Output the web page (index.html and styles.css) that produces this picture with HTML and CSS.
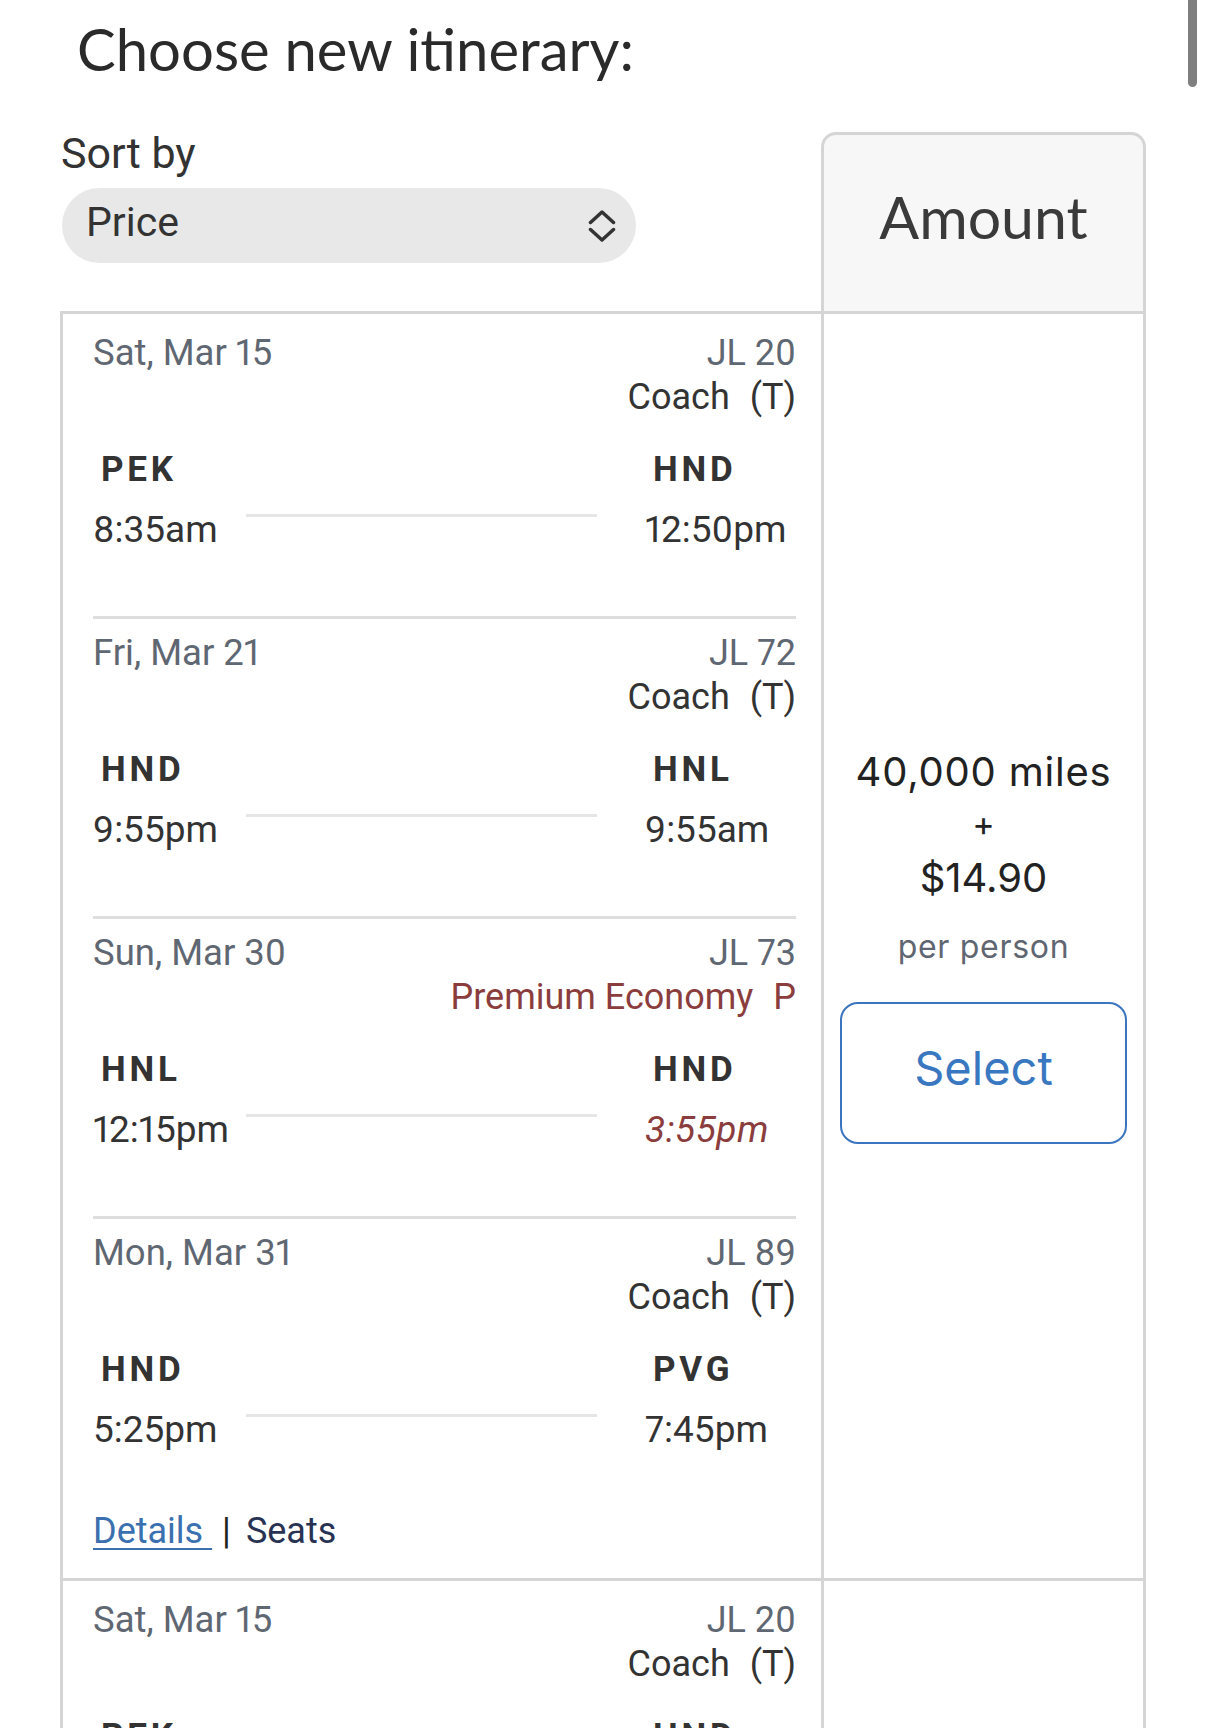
FILE: index.html
```html
<!DOCTYPE html>
<html lang="en">
<head>
<meta charset="utf-8">
<title>Choose new itinerary</title>
<link rel="stylesheet" href="styles.css">
</head>
<body>
<div class="scrollbar"></div>
<main class="page">
  <h1 class="title">Choose new itinerary:</h1>
  <div class="grid">
    <div class="sort">
      <label class="sort-label">Sort by</label>
      <div class="select">
        <span class="select-value">Price</span>
        <svg class="chev" viewBox="0 0 28 32" aria-hidden="true">
          <path d="M2.5 12.5 L14 2 L25.5 12.5" />
          <path d="M2.5 19.5 L14 30 L25.5 19.5" />
        </svg>
      </div>
    </div>
    <div class="amount-head">Amount</div>

    <div class="flights">
      <div class="seg first">
        <div class="seg-top">
          <span class="date">Sat, Mar 15</span>
          <div class="flt"><div class="fno">JL 20</div><div class="cabin">Coach <span class="cls">(T)</span></div></div>
        </div>
        <div class="route">
          <div class="code">PEK</div><div></div><div class="code code-arr">HND</div>
          <div class="time">8:35am</div><div class="line"></div><div class="time time-arr">12:50pm</div>
        </div>
      </div>
      <div class="seg">
        <div class="seg-top">
          <span class="date">Fri, Mar 21</span>
          <div class="flt"><div class="fno">JL 72</div><div class="cabin">Coach <span class="cls">(T)</span></div></div>
        </div>
        <div class="route">
          <div class="code">HND</div><div></div><div class="code code-arr">HNL</div>
          <div class="time">9:55pm</div><div class="line"></div><div class="time time-arr">9:55am</div>
        </div>
      </div>
      <div class="seg">
        <div class="seg-top">
          <span class="date">Sun, Mar 30</span>
          <div class="flt"><div class="fno">JL 73</div><div class="cabin prem">Premium Economy <span class="cls">P</span></div></div>
        </div>
        <div class="route">
          <div class="code">HNL</div><div></div><div class="code code-arr">HND</div>
          <div class="time">12:15pm</div><div class="line"></div><div class="time time-arr changed">3:55pm</div>
        </div>
      </div>
      <div class="seg last">
        <div class="seg-top">
          <span class="date">Mon, Mar 31</span>
          <div class="flt"><div class="fno">JL 89</div><div class="cabin">Coach <span class="cls">(T)</span></div></div>
        </div>
        <div class="route">
          <div class="code">HND</div><div></div><div class="code code-arr">PVG</div>
          <div class="time">5:25pm</div><div class="line"></div><div class="time time-arr">7:45pm</div>
        </div>
      </div>
      <div class="links"><a class="details" href="#">Details </a><span class="bar">|</span><a class="seats" href="#">Seats</a></div>
    </div>
    <div class="price">
      <div class="miles">40,000 miles</div>
      <div class="plus">+</div>
      <div class="usd">$14.90</div>
      <div class="pp">per person</div>
      <button class="select-btn" type="button">Select</button>
    </div>

    <div class="flights">
      <div class="seg first">
        <div class="seg-top">
          <span class="date">Sat, Mar 15</span>
          <div class="flt"><div class="fno">JL 20</div><div class="cabin">Coach <span class="cls">(T)</span></div></div>
        </div>
        <div class="route">
          <div class="code">PEK</div><div></div><div class="code code-arr">HND</div>
          <div class="time">8:35am</div><div class="line"></div><div class="time time-arr">12:50pm</div>
        </div>
      </div>
      <div class="seg">
        <div class="seg-top">
          <span class="date">Fri, Mar 21</span>
          <div class="flt"><div class="fno">JL 72</div><div class="cabin">Coach <span class="cls">(T)</span></div></div>
        </div>
        <div class="route">
          <div class="code">HND</div><div></div><div class="code code-arr">HNL</div>
          <div class="time">9:55pm</div><div class="line"></div><div class="time time-arr">9:55am</div>
        </div>
      </div>
      <div class="seg">
        <div class="seg-top">
          <span class="date">Sun, Mar 30</span>
          <div class="flt"><div class="fno">JL 73</div><div class="cabin">Coach <span class="cls">(T)</span></div></div>
        </div>
        <div class="route">
          <div class="code">HNL</div><div></div><div class="code code-arr">HND</div>
          <div class="time">12:15pm</div><div class="line"></div><div class="time time-arr">3:55pm</div>
        </div>
      </div>
      <div class="seg last">
        <div class="seg-top">
          <span class="date">Mon, Mar 31</span>
          <div class="flt"><div class="fno">JL 89</div><div class="cabin">Coach <span class="cls">(T)</span></div></div>
        </div>
        <div class="route">
          <div class="code">HND</div><div></div><div class="code code-arr">PVG</div>
          <div class="time">5:25pm</div><div class="line"></div><div class="time time-arr">7:45pm</div>
        </div>
      </div>
      <div class="links"><a class="details" href="#">Details </a><span class="bar">|</span><a class="seats" href="#">Seats</a></div>
    </div>
    <div class="price">
      <div class="miles">45,000 miles</div>
      <div class="plus">+</div>
      <div class="usd">$14.90</div>
      <div class="pp">per person</div>
      <button class="select-btn" type="button">Select</button>
    </div>
  </div>
</main>
</body>
</html>
```

FILE: styles.css
```css
* { box-sizing: border-box; }

html, body {
  margin: 0;
  padding: 0;
  background: #ffffff;
}

body {
  font-family: Roboto, "Liberation Sans", sans-serif;
  font-variant-numeric: proportional-nums;
  color: #333333;
}

.scrollbar {
  position: fixed;
  top: 0;
  left: 1188px;
  width: 9px;
  height: 87px;
  background: #7f7f7f;
  border-radius: 0 0 5px 5px;
}

.page {
  padding: 14px 0 0 60px;
}

.title {
  margin: 0 0 48px 17px;
  font-family: Lato, "Open Sans", sans-serif;
  font-weight: 400;
  font-size: 58px;
  line-height: 70px;
  color: #2a2a2a;
}

.grid {
  display: grid;
  grid-template-columns: 761px 325px;
}

.sort-label {
  display: block;
  font-size: 43px;
  line-height: 42px;
  color: #333333;
  margin-left: 1px;
}

.select {
  margin: 14px 0 0 2px;
  width: 574px;
  height: 75px;
  border-radius: 38px;
  background: #e8e8e8;
  display: flex;
  align-items: center;
  justify-content: space-between;
  padding: 0 20px 0 24px;
}

.select-value {
  font-size: 41px;
  line-height: 48px;
  margin-top: -7px;
  color: #333333;
}

.chev {
  width: 28px;
  height: 32px;
  fill: none;
  stroke: #333333;
  stroke-width: 3.5;
  stroke-linecap: round;
  stroke-linejoin: round;
}

.amount-head {
  border: 3px solid #d5d5d5;
  border-bottom: none;
  border-radius: 15px 15px 0 0;
  background: #f7f7f7;
  height: 179px;
  display: flex;
  align-items: center;
  justify-content: center;
  padding-bottom: 13px;
  font-family: Lato, "Open Sans", sans-serif;
  font-size: 59px;
  line-height: 72px;
  color: #3a3a3a;
}

.flights {
  border-left: 3px solid #d5d5d5;
  border-top: 3px solid #d5d5d5;
  padding: 5px 25px 25px 30px;
}

.seg {
  padding: 12px 0 64px;
  border-top: 3px solid #dedede;
}

.seg.first { border-top: none; }
.seg.last { padding-bottom: 0; }

.seg-top {
  display: flex;
  justify-content: space-between;
  align-items: flex-start;
}

.date {
  font-size: 36.5px;
  line-height: 44px;
  color: #5f6772;
}

.flt {
  text-align: right;
  font-size: 36px;
  line-height: 44px;
}

.fno { color: #5f6772; }
.cabin { color: #333333; }
.cabin.prem { color: #8b3d3d; }
.cls { margin-left: 11px; }

.route {
  display: grid;
  grid-template-columns: 153px 351px 1fr;
  row-gap: 16px;
  margin-top: 29px;
}

.code {
  font-weight: 700;
  font-size: 35px;
  line-height: 44px;
  letter-spacing: 3.8px;
  margin-left: 8px;
  color: #333333;
}

.code-arr { margin-left: 56px; }

.time {
  font-size: 37px;
  line-height: 44px;
  color: #333333;
}

.time-arr { margin-left: 48px; }

.time.changed {
  color: #8b3d3d;
  font-style: italic;
  letter-spacing: 0.5px;
}

.line {
  height: 3px;
  margin-top: 6px;
  background: #e6e6e6;
}

.links {
  margin-top: 57px;
  display: flex;
  align-items: center;
  font-size: 36px;
  line-height: 44px;
}

.details {
  color: #3a70b0;
  text-decoration: underline;
  text-underline-offset: 5px;
  text-decoration-thickness: 2px;
  white-space: pre;
}

.bar {
  margin: 0 12px 0 10px;
  color: #222222;
}

.seats {
  color: #283252;
  text-decoration: none;
  margin-left: 3px;
}

.price {
  border-left: 3px solid #d5d5d5;
  border-right: 3px solid #d5d5d5;
  border-top: 3px solid #d5d5d5;
  display: flex;
  flex-direction: column;
  align-items: center;
  justify-content: center;
  font-family: Inter, "Open Sans", sans-serif;
  color: #222222;
}

.miles { font-size: 40px; line-height: 48px; letter-spacing: 0.8px; }
.plus { font-size: 34px; line-height: 40px; margin-top: 8px; }
.usd { font-size: 40px; line-height: 48px; margin-top: 10px; }
.pp { font-size: 32px; line-height: 40px; margin-top: 25px; color: #5f6672; letter-spacing: 0.7px; }

.select-btn {
  margin-top: 35px;
  width: 287px;
  height: 142px;
  border: 2.5px solid #3b75bf;
  border-radius: 18px;
  background: #ffffff;
  font-family: Inter, "Open Sans", sans-serif;
  font-size: 47px;
  line-height: 56px;
  color: #3a77c1;
  padding: 0 0 10px;
}
```
